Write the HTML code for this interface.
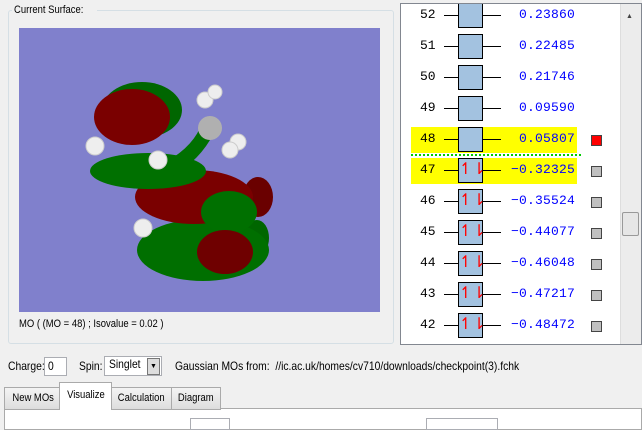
<!DOCTYPE html>
<html><head><style>
body{margin:0;width:642px;height:424px;background:#f0f0f0;font-family:"Liberation Sans",sans-serif;font-size:11px;position:relative;overflow:hidden}
.a{position:absolute}
.n{display:inline-block;transform:scaleX(0.86);transform-origin:left;white-space:nowrap}
.grp{left:8px;top:10px;width:384px;height:332px;border:1px solid #d5dfe5;border-radius:3px}
.list{left:400px;top:3px;width:240px;height:340px;background:#fff;border:1px solid #828790;overflow:hidden}
.row{position:absolute;left:0;width:220px;height:26px;font-family:"Liberation Mono",monospace;font-size:13px}
.num{position:absolute;left:19px;top:4px}
.ln{position:absolute;left:43px;top:12px;width:57px;height:1px;background:#000}
.bx{position:absolute;left:57px;top:0;width:23px;height:23px;background:#a3c2e0;border:1px solid #000;color:#f00;font-size:16px;text-align:center;line-height:22px}
.val{position:absolute;right:46px;top:4px;color:#0000ff;letter-spacing:0.2px}
.sq{position:absolute;left:190px;top:8px;width:9px;height:9px;background:#c0c0c0;border:1px solid #444}
.hl{background:#ffff00;left:10px;width:166px;height:26px;position:absolute}
.tab{position:absolute;top:387px;height:21px;border:1px solid #aaa;background:linear-gradient(#f4f4f4,#ddd);font-size:11px;line-height:21px;text-align:center;overflow:hidden}
</style></head><body>
<div class="a grp"></div>
<div class="a" style="left:12px;top:4px;background:#f0f0f0;padding:0 2px;font-size:11px"><span class="n">Current Surface:</span></div>
<div class="a" style="left:19px;top:28px;width:361px;height:284px;background:#8080cc">
<svg width="361" height="284" viewBox="19 28 361 284">
<ellipse cx="142" cy="110" rx="40" ry="28" fill="#006600"/>
<ellipse cx="257" cy="238" rx="12" ry="18" fill="#006600"/>
<ellipse cx="203" cy="250" rx="66" ry="31" fill="#006f00"/>
<ellipse cx="258" cy="197" rx="15" ry="20" fill="#6a0000"/>
<ellipse cx="194" cy="197" rx="59" ry="27" fill="#7a0000"/>
<ellipse cx="229" cy="212" rx="28" ry="21" fill="#007000"/>
<ellipse cx="225" cy="252" rx="28" ry="22" fill="#6f0000"/>
<ellipse cx="148" cy="171" rx="58" ry="18" fill="#007000"/>
<path d="M160 165 Q190 150 200 128 L210 140 Q195 165 165 180Z" fill="#007000"/>
<ellipse cx="132" cy="117" rx="38" ry="28" fill="#7a0000"/>
<circle cx="210" cy="128" r="12" fill="#b0b0b0"/>
<g fill="#eee" stroke="#ccc"><circle cx="95" cy="146" r="9"/><circle cx="158" cy="160" r="9"/><circle cx="143" cy="228" r="9"/><circle cx="205" cy="100" r="8"/><circle cx="215" cy="92" r="7"/><circle cx="238" cy="142" r="8"/><circle cx="230" cy="150" r="8"/></g>
</svg></div>
<div class="a" style="left:19px;top:318px"><span class="n">MO ( (MO = 48) ; Isovalue = 0.02 )</span></div>

<div class="a list">
<div class="a" style="left:0;top:-16px;width:220px;height:360px;overflow:visible">
<div class="row" style="top:15px"><span class="num">52</span><div class="ln"></div><div class="bx"></div><span class="val">0.23860</span></div>
<div class="row" style="top:46px"><span class="num">51</span><div class="ln"></div><div class="bx"></div><span class="val">0.22485</span></div>
<div class="row" style="top:77px"><span class="num">50</span><div class="ln"></div><div class="bx"></div><span class="val">0.21746</span></div>
<div class="row" style="top:108px"><span class="num">49</span><div class="ln"></div><div class="bx"></div><span class="val">0.09590</span></div>
<div class="row" style="top:139px"><div class="hl"></div><span class="num">48</span><div class="ln"></div><div class="bx"></div><span class="val">0.05807</span><div class="sq" style="background:#f00"></div></div>
<div class="a" style="left:10px;top:166px;width:170px;border-top:2px dotted #00cc00"></div>
<div class="row" style="top:170px"><div class="hl"></div><span class="num">47</span><div class="ln"></div><div class="bx">↿⇂</div><span class="val">−0.32325</span><div class="sq"></div></div>
<div class="row" style="top:201px"><span class="num">46</span><div class="ln"></div><div class="bx">↿⇂</div><span class="val">−0.35524</span><div class="sq"></div></div>
<div class="row" style="top:232px"><span class="num">45</span><div class="ln"></div><div class="bx">↿⇂</div><span class="val">−0.44077</span><div class="sq"></div></div>
<div class="row" style="top:263px"><span class="num">44</span><div class="ln"></div><div class="bx">↿⇂</div><span class="val">−0.46048</span><div class="sq"></div></div>
<div class="row" style="top:294px"><span class="num">43</span><div class="ln"></div><div class="bx">↿⇂</div><span class="val">−0.47217</span><div class="sq"></div></div>
<div class="row" style="top:325px"><span class="num">42</span><div class="ln"></div><div class="bx">↿⇂</div><span class="val">−0.48472</span><div class="sq"></div></div>
<div class="row" style="top:356px"><span class="num">41</span><div class="ln"></div><div class="bx">↿⇂</div></div>
</div>
<div class="a" style="left:219px;top:0;width:20px;height:340px;background:#ececec;border-left:1px solid #ddd"></div>
<div class="a" style="left:225px;top:9px;font-size:7px;color:#444">▲</div>
<div class="a" style="left:221px;top:208px;width:15px;height:22px;background:#e6e6e6;border:1px solid #999;border-radius:2px"></div>
</div>

<div class="a" style="left:8px;top:359px;font-size:12px"><span class="n">Charge:</span></div>
<div class="a" style="left:44px;top:357px;width:18px;height:17px;background:#fff;border:1px solid #abadb3;font-size:12px;line-height:17px;padding-left:3px"><span class="n">0</span></div>
<div class="a" style="left:79px;top:359px;font-size:12px"><span class="n">Spin:</span></div>
<div class="a" style="left:104px;top:356px;width:52px;height:18px;background:#fff;border:1px solid #abadb3;font-size:12px;padding-left:4px"><span class="n">Singlet</span></div>
<div class="a" style="left:147px;top:358px;width:11px;height:15px;background:#ddd;border:1px solid #777;font-size:7px;text-align:center;line-height:15px">▼</div>
<div class="a" style="left:175px;top:359px;font-size:12px"><span class="n">Gaussian MOs from:&nbsp; //ic.ac.uk/homes/cv710/downloads/checkpoint(3).fchk</span></div>

<div class="a" style="left:4px;top:408px;width:636px;height:20px;background:#fff;border:1px solid #aaa"></div>
<div class="tab" style="left:4px;width:56px"><span class="n" style="transform-origin:center">New MOs</span></div>
<div class="tab" style="left:59px;top:382px;width:51px;height:27px;background:#fff;border-bottom:none;line-height:24px"><span class="n" style="transform-origin:center">Visualize</span></div>
<div class="tab" style="left:111px;width:59px"><span class="n" style="transform-origin:center">Calculation</span></div>
<div class="tab" style="left:171px;width:48px"><span class="n" style="transform-origin:center">Diagram</span></div>
<div class="a" style="left:190px;top:418px;width:38px;height:10px;border:1px solid #abadb3;background:#fff"></div>
<div class="a" style="left:426px;top:418px;width:70px;height:10px;border:1px solid #abadb3;background:#fff"></div>
</body></html>
